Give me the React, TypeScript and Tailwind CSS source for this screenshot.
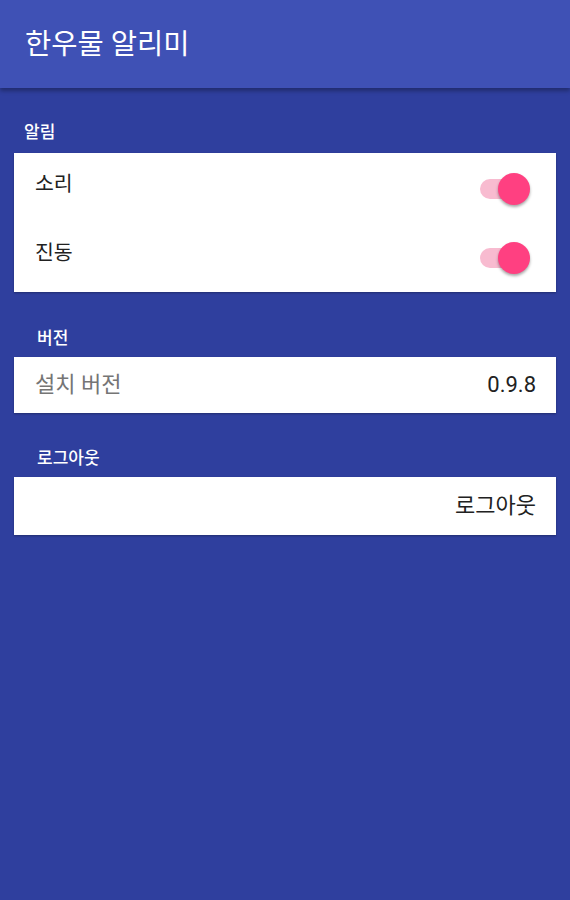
import React from 'react';

const font = { fontFamily: '"Roboto", "Noto Sans CJK KR", sans-serif' };

const Toggle = () => (
  <div className="relative w-[50px] h-[32px] flex items-center">
    <div className="absolute left-0 right-[2px] h-[20px] rounded-full bg-[#f8bbd0]" />
    <div className="absolute right-0 w-[32px] h-[32px] rounded-full bg-[#ff4081] shadow-[0_2px_3px_rgba(0,0,0,0.35)]" />
  </div>
);

const SectionLabel = ({ text, indent }: { text: string; indent: string }) => (
  <div className={`text-white text-[17px] font-medium leading-none ${indent}`}>{text}</div>
);

export default function App() {
  return (
    <div className="w-[570px] h-[900px] bg-[#2f3f9e] flex flex-col" style={font}>
      {/* Toolbar */}
      <div className="h-[88px] bg-[#3f51b5] flex items-center px-[25px] pt-[3px] shadow-[0_3px_4px_rgba(0,0,0,0.3)] relative z-10">
        <h1 className="text-white text-[28.5px] leading-none">한우물 알리미</h1>
      </div>

      <div className="flex flex-col pt-[36px]">
        <SectionLabel text="알림" indent="pl-[24px]" />
        <div className="mx-[14px] mt-[12px] bg-white h-[139px] flex flex-col shadow-[0_1px_2px_rgba(0,0,0,0.3)]">
          <div className="flex items-center justify-between pl-[21px] pr-[26px] pt-[20px]">
            <span className="text-[20.5px] text-[#212121] leading-none mb-[10px]">소리</span>
            <Toggle />
          </div>
          <div className="flex items-center justify-between pl-[21px] pr-[26px] pt-[37px]">
            <span className="text-[20.5px] text-[#212121] leading-none mb-[10px]">진동</span>
            <Toggle />
          </div>
        </div>

        <div className="mt-[38px]">
          <SectionLabel text="버전" indent="pl-[37px]" />
        </div>
        <div className="mx-[14px] mt-[10px] bg-white h-[56px] flex items-center justify-between pl-[21px] pr-[20px] shadow-[0_1px_2px_rgba(0,0,0,0.3)]">
          <span className="text-[22px] text-[#757575] leading-none">설치 버전</span>
          <span className="text-[22px] text-[#212121] leading-none">0.9.8</span>
        </div>

        <div className="mt-[37px]">
          <SectionLabel text="로그아웃" indent="pl-[37px]" />
        </div>
        <div className="mx-[14px] mt-[10px] bg-white h-[58px] flex items-center justify-end pr-[20px] shadow-[0_1px_2px_rgba(0,0,0,0.3)]">
          <span className="text-[22px] text-[#212121] leading-none">로그아웃</span>
        </div>
      </div>
    </div>
  );
}
